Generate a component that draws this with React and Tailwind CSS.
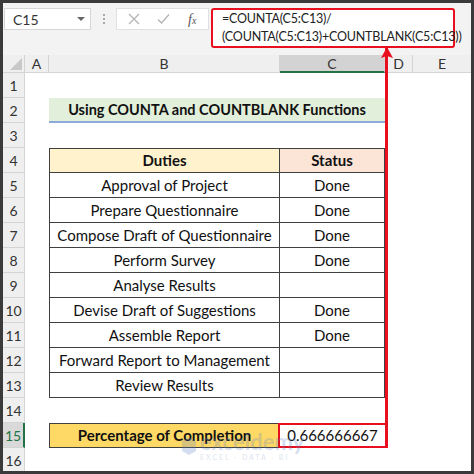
import React from 'react';

const font = { fontFamily: 'Lato, "Liberation Sans", sans-serif' };

const duties = [
    ['Approval of Project', 'Done'],
    ['Prepare Questionnaire', 'Done'],
    ['Compose Draft of Questionnaire', 'Done'],
    ['Perform Survey', 'Done'],
    ['Analyse Results', ''],
    ['Devise Draft of Suggestions', 'Done'],
    ['Assemble Report', 'Done'],
    ['Forward Report to Management', ''],
    ['Review Results', ''],
];

const RowHead = ({ n, active }) => (
    <div className={`flex w-[22px] shrink-0 items-center justify-center border-b border-r text-[14px] ${active ? 'border-r-2 border-b-[#d4d4d4] border-r-[#217346] bg-[#d9d9d9] text-[#217346]' : 'border-[#d4d4d4] bg-[#efefef] text-[#333]'}`}>
        {n}
    </div>
);

const Row = ({ n, active, children }) => (
    <div className="flex h-[25px]">
        <RowHead n={n} active={active} />
        <div className="w-[24px] shrink-0" />
        {children}
    </div>
);

export default function App() {
    return (
        <div className="h-[474px] w-[474px] bg-[#3a3a3a] p-[3px]" style={font}>
            <div className="relative h-full w-full overflow-hidden bg-white">
                {/* formula bar */}
                <div className="flex h-[52px] items-start bg-[#f3f3f3] pt-[5px]">
                    <div className="ml-[1px] flex h-[22px] w-[87px] items-center justify-between border border-[#d6d6d6] bg-white pl-[8px] pr-[5px] text-[14px] text-[#333]">
                        <span>C15</span>
                        <span className="h-0 w-0 border-x-[4px] border-t-[4px] border-x-transparent border-t-[#666]" />
                    </div>
                    <div className="ml-[12px] flex h-[22px] flex-col justify-center gap-[2px]">
                        <span className="h-[2px] w-[2px] bg-[#aaa]" />
                        <span className="h-[2px] w-[2px] bg-[#aaa]" />
                        <span className="h-[2px] w-[2px] bg-[#aaa]" />
                    </div>
                    <div className="ml-[11px] flex h-[22px] w-[93px] items-center border border-[#e0e0e0] bg-white text-[#b4b4b4]">
                        <svg width="12" height="12" viewBox="0 0 12 12" className="ml-[11px]">
                            <path d="M1 1L11 11M11 1L1 11" stroke="#b4b4b4" strokeWidth="1.3" />
                        </svg>
                        <svg width="13" height="12" viewBox="0 0 13 12" className="ml-[17px]">
                            <path d="M1 6.5L4.5 10L12 1.5" stroke="#b4b4b4" strokeWidth="1.3" fill="none" />
                        </svg>
                        <span className="ml-[18px] text-[14px] italic text-[#555]" style={{ fontFamily: '"Liberation Serif", serif' }}>
                            f<span className="text-[10px]">x</span>
                        </span>
                    </div>
                    <div className="ml-[2px] flex h-[40px] w-[244px] flex-col justify-center rounded-[3px] border-[2.5px] border-[#e8101e] bg-white pl-[9px] text-[12.5px] leading-[18px] tracking-[-0.2px] text-[#222]">
                        <span>=COUNTA(C5:C13)/</span>
                        <span>(COUNTA(C5:C13)+COUNTBLANK(C5:C13))</span>
                    </div>
                </div>

                {/* column headers */}
                <div className="flex h-[18px] bg-[#efefef] text-[14px] text-[#333]">
                    <div className="relative w-[22px] shrink-0 border-b border-r border-[#d4d4d4]">
                        <span className="absolute bottom-[2px] right-[2px] h-0 w-0" style={{ borderBottom: '12px solid #c8c8c8', borderLeft: '12px solid transparent' }} />
                    </div>
                    <div className="flex w-[24px] shrink-0 items-center justify-center border-b border-r border-[#d4d4d4]">A</div>
                    <div className="flex w-[231px] shrink-0 items-center justify-center border-b border-r border-[#d4d4d4]">B</div>
                    <div className="flex w-[105px] shrink-0 items-center justify-center border-b-2 border-r border-b-[#217346] border-r-[#d4d4d4] bg-[#d3d3d3]">C</div>
                    <div className="flex w-[28px] shrink-0 items-center justify-center border-b border-r border-[#d4d4d4]">D</div>
                    <div className="flex flex-1 items-center justify-center border-b border-[#d4d4d4]">E</div>
                </div>

                {/* sheet */}
                <div className="text-[15px] text-[#111]">
                    <Row n={1} />
                    <Row n={2}>
                        <div className="flex w-[336px] shrink-0 items-center justify-center border-b-2 border-[#8eaadb] bg-[#e2efda] text-[14.5px] font-bold">
                            Using COUNTA and COUNTBLANK Functions
                        </div>
                    </Row>
                    <Row n={3} />
                    <Row n={4}>
                        <div className="flex w-[231px] shrink-0 items-center justify-center border border-[#404040] bg-[#fff2cc] font-bold">Duties</div>
                        <div className="flex w-[105px] shrink-0 items-center justify-center border-y border-r border-[#404040] bg-[#fce4d6] font-bold">Status</div>
                    </Row>
                    {duties.map(([d, s], i) => (
                        <Row key={d} n={i + 5}>
                            <div className="flex w-[231px] shrink-0 items-center justify-center border-x border-b border-[#404040]">{d}</div>
                            <div className="flex w-[105px] shrink-0 items-center justify-center border-b border-r border-[#404040]">{s}</div>
                        </Row>
                    ))}
                    <Row n={14} />
                    <Row n={15} active>
                        <div className="flex w-[231px] shrink-0 items-center justify-center border border-[#404040] bg-[#ffd966] font-bold">Percentage of Completion</div>
                        <div className="ml-[-2px] flex w-[109px] shrink-0 items-center justify-center border-[2.5px] border-[#e8101e] bg-white">0.666666667</div>
                    </Row>
                    <Row n={16} />
                </div>

                {/* annotation arrow */}
                <div className="absolute left-[382px] top-[45px] h-[400px] w-[2.5px] bg-[#e8101e]" />
                <svg className="absolute left-[377.5px] top-[44px]" width="12" height="12" viewBox="0 0 12 12">
                    <path d="M6 0L12 11L6 9L0 11Z" fill="#e8101e" />
                </svg>

                {/* watermark */}
                <div className="pointer-events-none absolute left-[178px] top-[428px] flex items-center gap-[3px] opacity-25">
                    <svg width="16" height="18" viewBox="0 0 16 18">
                        <path d="M1 4L8 0L15 4V14L8 18L1 14Z" fill="#5b7fc4" />
                    </svg>
                    <div className="flex flex-col leading-none">
                        <span className="text-[22px] font-bold text-[#5b7fc4]">exceldemy</span>
                        <span className="mt-[1px] text-[7px] tracking-[2px] text-[#7a8fb5]">EXCEL · DATA · BI</span>
                    </div>
                </div>
            </div>
        </div>
    );
}
